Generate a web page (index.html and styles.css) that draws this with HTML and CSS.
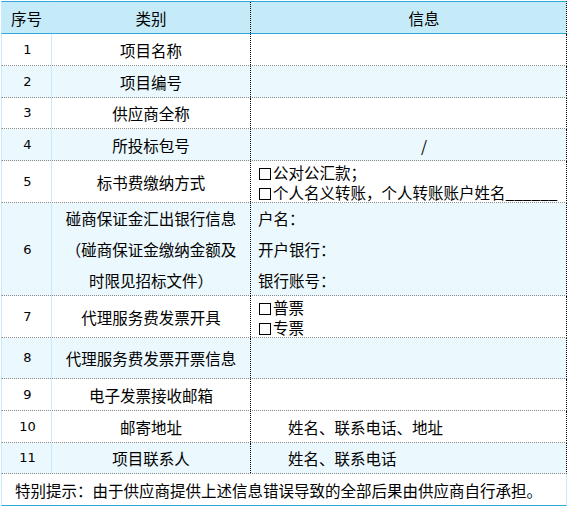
FILE: index.html
```html
<!DOCTYPE html>
<html lang="zh-CN">
<head>
<meta charset="utf-8">
<title>信息表</title>
<link rel="stylesheet" href="styles.css">
</head>
<body>
<div class="sheet">
  <div class="row head h33">
    <div class="c1">序号</div>
    <div class="c2">类别</div>
    <div class="c3 shift">信息</div>
  </div>
  <div class="row h32">
    <div class="c1 num">1</div>
    <div class="c2">项目名称</div>
    <div class="c3"></div>
  </div>
  <div class="row alt h32">
    <div class="c1 num">2</div>
    <div class="c2">项目编号</div>
    <div class="c3"></div>
  </div>
  <div class="row h31">
    <div class="c1 num">3</div>
    <div class="c2">供应商全称</div>
    <div class="c3"></div>
  </div>
  <div class="row alt h32">
    <div class="c1 num">4</div>
    <div class="c2">所投标包号</div>
    <div class="c3 shift">/</div>
  </div>
  <div class="row h42">
    <div class="c1 num">5</div>
    <div class="c2">标书费缴纳方式</div>
    <div class="c3 left lines20">
      <div><span class="box"></span>公对公汇款；</div>
      <div><span class="box"></span>个人名义转账，个人转账账户姓名______</div>
    </div>
  </div>
  <div class="row alt h93">
    <div class="c1 num">6</div>
    <div class="c2 lines31">
      <div>碰商保证金汇出银行信息</div>
      <div>（碰商保证金缴纳金额及</div>
      <div>时限见招标文件）</div>
    </div>
    <div class="c3 left lines31 tight">
      <div>户名：</div>
      <div>开户银行：</div>
      <div>银行账号：</div>
    </div>
  </div>
  <div class="row h42">
    <div class="c1 num">7</div>
    <div class="c2">代理服务费发票开具</div>
    <div class="c3 left lines20">
      <div><span class="box"></span>普票</div>
      <div><span class="box"></span>专票</div>
    </div>
  </div>
  <div class="row alt h41">
    <div class="c1 num">8</div>
    <div class="c2">代理服务费发票开票信息</div>
    <div class="c3"></div>
  </div>
  <div class="row h32">
    <div class="c1 num">9</div>
    <div class="c2">电子发票接收邮箱</div>
    <div class="c3"></div>
  </div>
  <div class="row h32">
    <div class="c1 num">10</div>
    <div class="c2">邮寄地址</div>
    <div class="c3 indent">姓名、联系电话、地址</div>
  </div>
  <div class="row alt h31">
    <div class="c1 num">11</div>
    <div class="c2">项目联系人</div>
    <div class="c3 indent">姓名、联系电话</div>
  </div>
  <div class="foot">特别提示：由于供应商提供上述信息错误导致的全部后果由供应商自行承担。</div>
</div>
</body>
</html>
```

FILE: styles.css
```css
html, body {
  margin: 0;
  padding: 0;
  background: #ffffff;
}

body {
  font-family: "Noto Sans CJK SC", "Noto Sans", sans-serif;
  font-size: 15.5px;
  color: #000000;
}

.sheet {
  margin: 1px 0 0 1px;
  width: 566px;
  box-sizing: border-box;
}

.row {
  display: grid;
  grid-template-columns: 50px 199px 315px;
  box-sizing: border-box;
  border-left: 1px solid #c9ebf8;
  border-right: 1px dotted #000000;
  border-bottom: 1px dotted #8a8a8a;
  background: #ffffff;
}

.row.alt {
  background: #ebf8fd;
}

.row.head {
  background: #c6ebf8;
  border-top: 1px solid #2ea8d6;
  border-bottom: 1px solid #2ea8d6;
}

.h31 { height: 31px; }
.h32 { height: 32px; }
.h33 { height: 33px; }
.h41 { height: 41px; }
.h42 { height: 42px; }
.h93 { height: 93px; }

.c1, .c2, .c3 {
  display: flex;
  flex-direction: column;
  justify-content: center;
  align-items: center;
  text-align: center;
  white-space: nowrap;
  line-height: 20px;
}

.c1 {
  border-right: 1px solid #c9ebf8;
}

.c2 {
  border-right: 1px dotted #000000;
}

.num {
  font-family: "DejaVu Sans", "Liberation Sans", sans-serif;
  font-size: 13px;
  padding-left: 2px;
}

.shift {
  padding-left: 31px;
}

.left {
  align-items: flex-start;
  text-align: left;
  padding-left: 8px;
}

.left.tight {
  padding-left: 7px;
}

.box {
  display: inline-block;
  box-sizing: border-box;
  width: 12px;
  height: 12px;
  border: 1px solid #000000;
  margin-right: 2px;
  vertical-align: -1px;
}

.indent {
  align-items: flex-start;
  padding-left: 37px;
}

.lines20 {
  line-height: 20px;
}

.lines31 {
  line-height: 31px;
}

.foot {
  box-sizing: border-box;
  height: 32px;
  display: flex;
  align-items: center;
  padding-left: 13px;
  border-left: 1px solid #c9ebf8;
  border-right: 1px solid #c9ebf8;
  border-bottom: 1px solid #2ea8d6;
  white-space: nowrap;
}
```
